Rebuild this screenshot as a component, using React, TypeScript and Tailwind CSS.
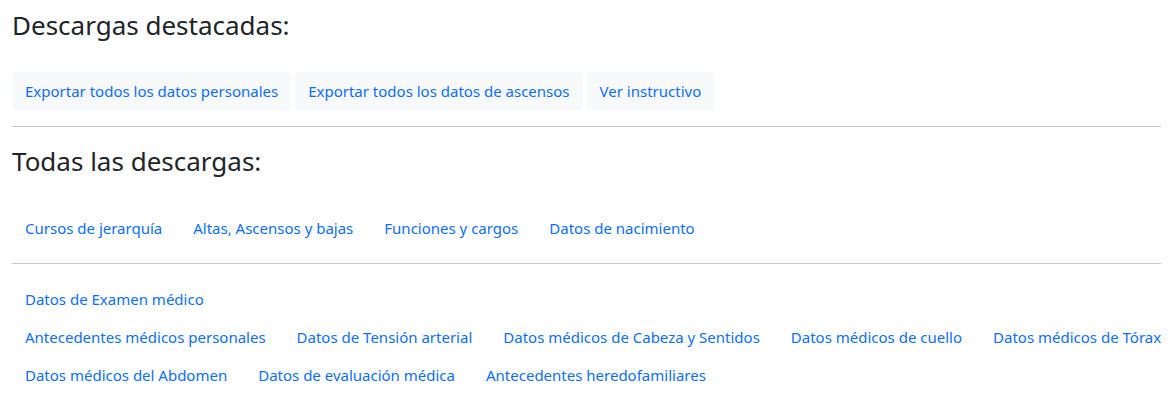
const destacadas = [
  "Exportar todos los datos personales",
  "Exportar todos los datos de ascensos",
  "Ver instructivo",
];

const generales = [
  "Cursos de jerarquía",
  "Altas, Ascensos y bajas",
  "Funciones y cargos",
  "Datos de nacimiento",
];

const medicos = [
  ["Datos de Examen médico"],
  [
    "Antecedentes médicos personales",
    "Datos de Tensión arterial",
    "Datos médicos de Cabeza y Sentidos",
    "Datos médicos de cuello",
    "Datos médicos de Tórax",
  ],
  [
    "Datos médicos del Abdomen",
    "Datos de evaluación médica",
    "Antecedentes heredofamiliares",
  ],
];

const LinkBtn = ({ label, light }: { label: string; light?: boolean }) => (
  <button
    className={
      "h-[38px] px-[13px] rounded text-[15px] text-[#0d6efd] whitespace-nowrap " +
      (light ? "bg-[#f8f9fa]" : "bg-transparent")
    }
  >
    {label}
  </button>
);

const App = () => {
  return (
    <div className="min-h-screen bg-white px-3 pt-[7px] font-['Noto_Sans',sans-serif] text-[#212529]">
      <h3 className="text-[26px] leading-[36px] mb-[29px]">Descargas destacadas:</h3>
      <div className="flex gap-1">
        {destacadas.map((d) => (
          <LinkBtn key={d} label={d} light />
        ))}
      </div>
      <hr className="my-4 border-[#c8c8c8]" />
      <h3 className="text-[26px] leading-[36px] mb-[30px]">Todas las descargas:</h3>
      <div className="flex gap-[5px] mb-4">
        {generales.map((g) => (
          <LinkBtn key={g} label={g} />
        ))}
      </div>
      <hr className="mt-4 mb-4 border-[#c8c8c8]" />
      <div className="flex flex-col">
        {medicos.map((row, i) => (
          <div key={i} className="flex gap-[5px]">
            {row.map((m) => (
              <LinkBtn key={m} label={m} />
            ))}
          </div>
        ))}
      </div>
    </div>
  );
};

export default App;
